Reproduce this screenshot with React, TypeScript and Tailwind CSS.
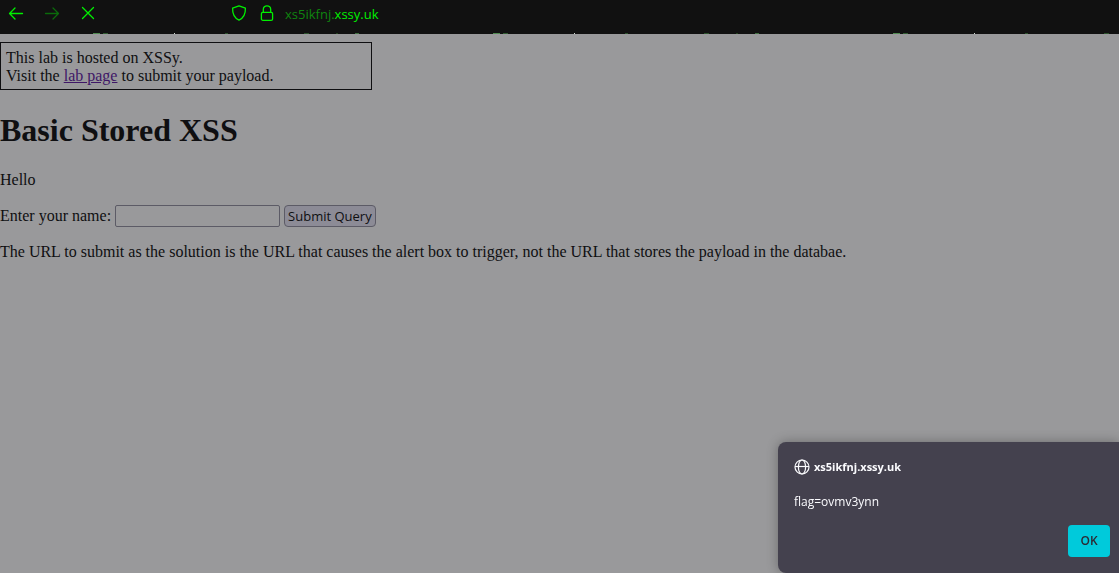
import type { ReactNode } from 'react'

function ToolbarIcon({ label, className, children }: { label: string; className: string; children: ReactNode }) {
  return (
    <button type="button" aria-label={label} className={className}>
      <svg width="16" height="16" viewBox="0 0 16 16" fill="none" stroke="currentColor" strokeWidth="1.3" strokeLinecap="round" strokeLinejoin="round">
        {children}
      </svg>
    </button>
  )
}

// Tops of the bookmark labels that show just above the page
function BookmarkEdge() {
  return (
    <svg className="block w-full h-px" aria-hidden="true" shapeRendering="crispEdges">
      <defs>
        <pattern id="labels" width="400" height="1" patternUnits="userSpaceOnUse">
          <rect x="93" width="7" height="1" fill="#4f8a50" />
          <rect x="103" width="5" height="1" fill="#315c32" />
          <rect x="174" width="1" height="1" fill="#d0d8d0" />
          <rect x="225" width="3" height="1" fill="#2b522c" />
          <rect x="304" width="5" height="1" fill="#2b522c" />
          <rect x="336" width="2" height="1" fill="#24431f" />
          <rect x="355" width="4" height="1" fill="#3f7040" />
        </pattern>
      </defs>
      <rect width="100%" height="1" fill="url(#labels)" />
    </svg>
  )
}

function Toolbar() {
  return (
    <header className="bg-[#111111] text-[#00f000]">
      <div className="flex items-center h-[33px] px-2 pb-[7px]">
        <nav className="flex items-center gap-5">
          <ToolbarIcon label="Back" className="block">
            <path d="M14.5 8.5H1.5M7 3L1.5 8.5L7 14" />
          </ToolbarIcon>
          <ToolbarIcon label="Forward" className="block text-[#0b6b0b]">
            <path d="M1.5 8.5H14.5M9 3L14.5 8.5L9 14" />
          </ToolbarIcon>
          <ToolbarIcon label="Stop" className="block">
            <path d="M2.5 2.5L13.5 13.5M13.5 2.5L2.5 13.5" />
          </ToolbarIcon>
        </nav>
        <div className="flex items-center gap-3 ml-[135px]">
          <ToolbarIcon label="Tracking protection" className="block">
            <path d="M8 0.9L14.4 3.2C14.6 8.6 12.9 12.8 8 15.1C3.1 12.8 1.4 8.6 1.6 3.2Z" />
          </ToolbarIcon>
          <ToolbarIcon label="Connection security" className="block">
            <rect x="2.4" y="7.3" width="11.2" height="8" rx="1.4" />
            <path d="M4.3 7.3V4.4C4.3 2.3 5.9 0.8 8 0.8S11.7 2.3 11.7 4.4V7.3" />
          </ToolbarIcon>
        </div>
        <p className="ml-2.5 pt-0.5 font-['Open_Sans',sans-serif] text-[13px] leading-5 text-[#0f850f]">
          xs5ikfnj.<span className="text-[#00f000]">xssy.uk</span>
        </p>
      </div>
      <BookmarkEdge />
    </header>
  )
}

function AlertDialog() {
  return (
    <section
      role="alertdialog"
      aria-labelledby="alert-origin"
      aria-describedby="alert-message"
      className="fixed right-0 bottom-0 w-[341px] rounded-l-lg bg-[#44414e] py-4 pl-4 pr-[9px] font-['Open_Sans',sans-serif] text-xs text-[#fbfbfe] shadow-[0_0_12px_rgba(0,0,0,0.3)]"
    >
      <div className="flex items-center gap-1">
        <svg width="16" height="16" viewBox="0 0 16 16" fill="none" stroke="currentColor" strokeWidth="1.2" aria-hidden="true">
          <circle cx="8" cy="8" r="7" />
          <ellipse cx="8" cy="8" rx="3.6" ry="7" />
          <path d="M1 7.5H15" />
        </svg>
        <h2 id="alert-origin" className="text-[11px] font-bold leading-[18px]">xs5ikfnj.xssy.uk</h2>
      </div>
      <p id="alert-message" className="mt-[17px] leading-[18px]">flag=ovmv3ynn</p>
      <div className="flex justify-end mt-3.5">
        <button type="button" className="h-8 w-[42px] rounded bg-[#00cadb] text-xs font-semibold text-[#2b2a33]">OK</button>
      </div>
    </section>
  )
}

export default function App() {
  return (
    <div className="min-h-screen bg-[#99999b] text-[#0f0f11]">
      <Toolbar />
      <main className="pt-2 font-['Liberation_Serif',serif] text-base leading-[18px]">
        <div className="w-full max-w-[372px] border border-[#0f0f11] px-[5px] pt-1.5 pb-1">
          This lab is hosted on XSSy.
          <br />
          Visit the <a href="#lab" className="text-[#3f1767] underline">lab page</a> to submit your payload.
        </div>
        <h1 className="mt-[21px] mb-[22px] text-[32px] leading-[38px] font-bold">Basic Stored XSS</h1>
        <p>Hello</p>
        <form className="flex items-center gap-1 mt-4" onSubmit={(e) => e.preventDefault()}>
          <label htmlFor="name">Enter your name:</label>
          <input id="name" type="text" className="h-[22px] w-[165px] rounded-xs border border-[#5c5b66] bg-[#99999b] px-1 text-[13px]" />
          <button type="submit" className="h-[22px] rounded border border-[#5c5b66] bg-[#8c8b96] px-[3px] font-['Open_Sans',sans-serif] text-[13px] leading-5">
            Submit Query
          </button>
        </form>
        <p className="mt-4">
          The URL to submit as the solution is the URL that causes the alert box to trigger, not the URL that stores the payload in the databae.
        </p>
      </main>
      <AlertDialog />
    </div>
  )
}
